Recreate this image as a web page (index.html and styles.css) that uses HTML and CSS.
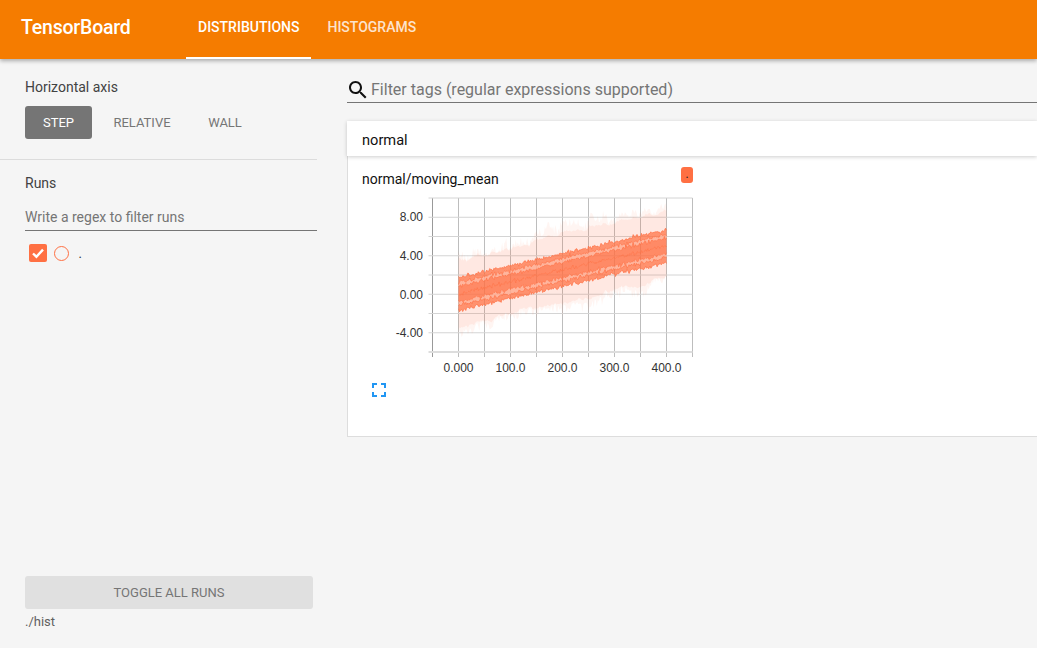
FILE: index.html
```html
<!DOCTYPE html>
<html lang="en">
<head>
    <meta charset="UTF-8">
    <title>TensorBoard</title>
    <link rel="stylesheet" href="styles.css">
</head>
<body>
    <header class="toolbar">
        <div class="logo">TensorBoard</div>
        <nav class="tabs">
            <a class="tab tab-active">DISTRIBUTIONS</a>
            <a class="tab">HISTOGRAMS</a>
        </nav>
    </header>

    <div class="page">
        <aside class="sidebar">
            <section class="axis-section">
                <div class="section-title">Horizontal axis</div>
                <div class="axis-buttons">
                    <button class="axis-btn axis-btn-active">STEP</button>
                    <button class="axis-btn axis-btn-relative">RELATIVE</button>
                    <button class="axis-btn axis-btn-wall">WALL</button>
                </div>
            </section>

            <section class="runs-section">
                <div class="section-title">Runs</div>
                <div class="runs-filter">Write a regex to filter runs</div>
                <div class="run-row">
                    <span class="run-check">
                        <svg viewBox="0 0 18 18" width="18" height="18"><path class="run-tick" d="M4 9.5l3.4 3.2L14 5.6"/></svg>
                    </span>
                    <span class="run-circle"></span>
                    <span class="run-name">.</span>
                </div>
            </section>

            <section class="runs-footer">
                <button class="toggle-btn">TOGGLE ALL RUNS</button>
                <div class="log-dir">./hist</div>
            </section>
        </aside>

        <main class="content">
            <div class="tag-filter">
                <svg class="search-icon" viewBox="0 0 24 24" width="24" height="24"><path d="M15.5 14h-.79l-.28-.27C15.41 12.59 16 11.11 16 9.5 16 5.91 13.09 3 9.5 3S3 5.91 3 9.5 5.91 16 9.5 16c1.61 0 3.09-.59 4.23-1.57l.27.28v.79l5 4.99L20.49 19l-4.99-5zm-6 0C7.01 14 5 11.99 5 9.5S7.01 5 9.5 5 14 7.01 14 9.5 11.99 14 9.5 14z"/></svg>
                <span>Filter tags (regular expressions supported)</span>
            </div>

            <div class="category-head">normal</div>
            <div class="category-body">
                <div class="widget">
                    <div class="widget-head">
                        <span class="widget-title">normal/moving_mean</span>
                        <span class="run-chip">.</span>
                    </div>
                    <svg id="chart" class="chart" width="340" height="188" viewBox="0 0 340 188"></svg>
                    <svg class="fullscreen-icon" viewBox="0 0 24 24" width="24" height="24"><path d="M7 14H5v5h5v-2H7v-3zm-2-4h2V7h3V5H5v5zm12 7h-3v2h5v-5h-2v3zM14 5v2h3v3h2V5h-5z"/></svg>
                </div>
            </div>
        </main>
    </div>

    <script src="chart.js"></script>
</body>
</html>
```

FILE: styles.css
```css
* {
    box-sizing: border-box;
}

body {
    margin: 0;
    height: 648px;
    overflow: hidden;
    display: flex;
    flex-direction: column;
    background-color: #f5f5f5;
    font-family: Roboto, "Noto Sans", sans-serif;
    color: #424242;
}

/* Top bar */
.toolbar {
    height: 59px;
    flex: none;
    display: flex;
    background-color: #f57c00;
    color: white;
    box-shadow: 0 2px 4px rgba(0, 0, 0, 0.3);
    position: relative;
    z-index: 2;
}

.logo {
    width: 186px;
    padding-left: 21px;
    font-size: 19.5px;
    font-weight: 500;
    line-height: 55px;
    letter-spacing: -0.2px;
}

.tabs {
    display: flex;
    gap: 4px;
}

.tab {
    padding: 0 12px;
    font-size: 14px;
    font-weight: 500;
    line-height: 55px;
    opacity: 0.8;
}

.tab-active {
    opacity: 1;
    border-bottom: 2px solid white;
}

.page {
    flex: 1;
    display: flex;
    min-height: 0;
}

/* Sidebar */
.sidebar {
    width: 317px;
    flex: none;
    display: flex;
    flex-direction: column;
}

.section-title {
    font-size: 14px;
    line-height: 18px;
}

.axis-section {
    height: 101px;
    padding: 19px 0 0 25px;
    border-bottom: 1px solid #dcdcdc;
}

.axis-buttons {
    display: flex;
    margin-top: 10px;
}

.axis-btn {
    height: 33px;
    border: none;
    border-radius: 3px;
    background: none;
    padding: 0;
    font-family: inherit;
    font-size: 13px;
    color: #757575;
}

.axis-btn-active {
    width: 67px;
    background-color: #757575;
    color: white;
}

.axis-btn-relative {
    margin-left: 21px;
    width: 58px;
}

.axis-btn-wall {
    margin-left: 37px;
    width: 34px;
}

.runs-section {
    padding: 14px 0 0 25px;
}

.runs-filter {
    height: 29px;
    margin-top: 10px;
    border-bottom: 1px solid #757575;
    font-size: 14px;
    line-height: 30px;
    color: #757575;
}

.run-row {
    display: flex;
    align-items: center;
    height: 18px;
    margin-top: 13px;
    padding-left: 4px;
}

.run-check {
    width: 18px;
    height: 18px;
    border-radius: 2px;
    background-color: #ff7043;
}

.run-check svg {
    display: block;
}

.run-tick {
    fill: none;
    stroke: white;
    stroke-width: 2.4;
}

.run-circle {
    width: 15px;
    height: 15px;
    margin-left: 7px;
    border: 1.5px solid #ff7043;
    border-radius: 50%;
}

.run-name {
    margin-left: 9.5px;
    font-size: 13px;
    color: #333;
}

.runs-footer {
    margin-top: auto;
    padding: 0 4px 18px 25px;
}

.toggle-btn {
    display: block;
    width: 100%;
    height: 33px;
    border: none;
    border-radius: 3px;
    background-color: #e0e0e0;
    font-family: inherit;
    font-size: 13px;
    color: #757575;
}

.log-dir {
    margin-top: 4px;
    font-size: 13px;
    line-height: 17px;
    color: #616161;
}

/* Main area */
.content {
    flex: 1;
    min-width: 0;
    padding: 18px 0 0 30px;
}

.tag-filter {
    height: 26px;
    display: flex;
    align-items: center;
    border-bottom: 1px solid #757575;
    font-size: 16px;
    color: #757575;
}

.search-icon {
    flex: none;
    margin: 0 1px 0 -1px;
}

.search-icon path {
    fill: #111;
}

.category-head {
    height: 35px;
    margin-top: 18px;
    padding-left: 15px;
    background-color: white;
    box-shadow: 0 1px 4px rgba(0, 0, 0, 0.2);
    font-size: 14.6px;
    line-height: 38px;
    color: #111;
    position: relative;
}

.category-body {
    height: 281px;
    background-color: white;
    border-left: 1px solid #ddd;
    border-bottom: 1px solid #ddd;
}

.widget {
    width: 345px;
    padding: 11px 0 0 14px;
}

.widget-head {
    display: flex;
    justify-content: space-between;
    align-items: flex-start;
    height: 23px;
}

.widget-title {
    font-size: 14px;
    line-height: 24px;
    color: #111;
}

.run-chip {
    width: 12px;
    height: 16px;
    border-radius: 3px;
    background-color: #ff7043;
    font-size: 12px;
    line-height: 14px;
    text-align: center;
    color: #222;
}

.chart {
    display: block;
}

.fullscreen-icon {
    display: block;
    margin-left: 4.5px;
}

.fullscreen-icon path {
    fill: #2196f3;
}

/* Chart */
.grid-v {
    stroke: #bdbdbd;
    stroke-width: 1;
}

.grid-h {
    stroke: #d4d4d4;
    stroke-width: 1;
}

.axis-line {
    stroke: #999;
    stroke-width: 1;
}

.axis-line-x {
    stroke: #ddd;
    stroke-width: 2;
}

.tick-label {
    font-family: "Liberation Sans", Arial, sans-serif;
    font-size: 12px;
    fill: #333;
}

.band-outer {
    fill: #ff7043;
    fill-opacity: 0.07;
}

.band-soft {
    fill: #ff7043;
    fill-opacity: 0.09;
}

.band-mid {
    fill: #ff7043;
    fill-opacity: 0.72;
}

.band-light {
    fill: #ffab91;
    fill-opacity: 0.85;
}

.band-core {
    fill: #ff7043;
    fill-opacity: 0.78;
}

.band-edge {
    fill: none;
    stroke: #ff7043;
    stroke-width: 0.7;
}
```

FILE: chart.js
```js
// Draws the distribution chart. The numbers are made up from a seeded generator
// so that the picture comes out the same each time.
(function () {
    var svg = document.getElementById('chart');
    var NS = 'http://www.w3.org/2000/svg';

    // svg origin is at page (362, 190)
    var plotLeft = 70.5, plotRight = 330.5, plotTop = 8, plotBottom = 162;
    var zeroY = 104, perUnit = 9.63;
    var zeroX = 96.5, perStep = 0.52;

    function add(name, attrs, text) {
        var el = document.createElementNS(NS, name);
        for (var key in attrs) {
            el.setAttribute(key, attrs[key]);
        }
        if (text) {
            el.textContent = text;
        }
        svg.appendChild(el);
        return el;
    }

    var seed = 12345;
    function random() {
        seed = (seed * 16807) % 2147483647;
        return seed / 2147483647;
    }

    function gauss() {
        return random() + random() + random() - 1.5;
    }

    function xOf(step) {
        return zeroX + step * perStep;
    }

    function yOf(value) {
        return zeroY - value * perUnit;
    }

    // grid
    for (var i = 0; i <= 10; i++) {
        var gx = plotLeft + i * 26;
        add('line', { x1: gx, x2: gx, y1: plotTop, y2: plotBottom + 5, 'class': i === 0 ? 'axis-line' : 'grid-v' });
    }
    for (var j = 0; j <= 8; j++) {
        var gy = plotTop + j * 19.25;
        add('line', { x1: plotLeft - 4, x2: plotRight, y1: gy, y2: gy, 'class': j === 8 ? 'axis-line-x' : 'grid-h' });
    }

    // percentile lines, from the top of the distribution down
    var maxUp = [], maxDown = [], softUp = [], softDown = [];
    var lines = [[], [], [], [], [], [], []];
    var sigmas = [1.7, 1.2, 0.8, 0, -0.8, -1.2, -1.7];
    var slowUp = 0, slowDown = 0;

    for (var s = 0; s <= 400; s += 2) {
        var mean = s / 80;
        slowUp = slowUp * 0.85 + gauss() * 0.35;
        slowDown = slowDown * 0.85 + gauss() * 0.35;
        maxUp.push([xOf(s), yOf(mean + 3.7 + slowUp + Math.abs(gauss()) * 0.9)]);
        maxDown.push([xOf(s), yOf(mean - 3.5 + slowDown - Math.abs(gauss()) * 0.9)]);
        softUp.push([xOf(s), yOf(mean + 3.6 + slowUp * 0.5)]);
        softDown.push([xOf(s), yOf(mean - 3.4 + slowDown * 0.5)]);
        for (var k = 0; k < sigmas.length; k++) {
            lines[k].push([xOf(s), yOf(mean + sigmas[k] + gauss() * 0.22)]);
        }
    }

    function linePath(points) {
        var d = '';
        points.forEach(function (p, n) {
            d += (n ? 'L' : 'M') + p[0].toFixed(1) + ' ' + p[1].toFixed(1);
        });
        return d;
    }

    function bandPath(upper, lower) {
        return linePath(upper) + linePath(lower.slice().reverse()).replace('M', 'L') + 'Z';
    }

    add('path', { d: bandPath(maxUp, maxDown), 'class': 'band-outer' });
    add('path', { d: bandPath(softUp, softDown), 'class': 'band-soft' });

    var styles = ['band-mid', 'band-light', 'band-core', 'band-core', 'band-light', 'band-mid'];
    styles.forEach(function (name, n) {
        add('path', { d: bandPath(lines[n], lines[n + 1]), 'class': name });
    });
    lines.forEach(function (points) {
        add('path', { d: linePath(points), 'class': 'band-edge' });
    });

    // tick labels
    [[8, '8.00'], [4, '4.00'], [0, '0.00'], [-4, '-4.00']].forEach(function (t) {
        add('text', { x: 61, y: yOf(t[0]) + 4.5, 'text-anchor': 'end', 'class': 'tick-label' }, t[1]);
    });
    ['0.000', '100.0', '200.0', '300.0', '400.0'].forEach(function (label, n) {
        add('text', { x: zeroX + n * 52, y: 182, 'text-anchor': 'middle', 'class': 'tick-label' }, label);
    });
})();
```
